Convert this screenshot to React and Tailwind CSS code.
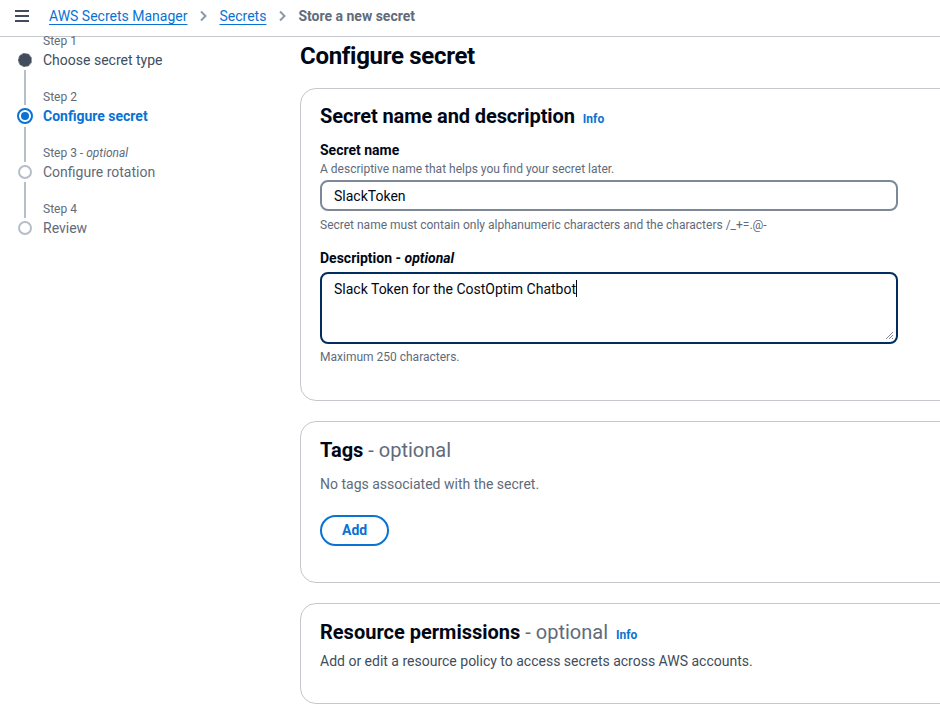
import React from "react";

const font = { fontFamily: "Roboto, 'Liberation Sans', sans-serif" };

function Steps() {
  const steps = [
    { label: "Step 1", title: "Choose secret type", state: "done" },
    { label: "Step 2", title: "Configure secret", state: "active" },
    { label: "Step 3", optional: true, title: "Configure rotation", state: "todo" },
    { label: "Step 4", title: "Review", state: "todo" },
  ];
  return (
    <div className="w-[300px] shrink-0 pl-[12px] -mt-[8px]">
      {steps.map((s, i) => (
        <div key={i} className="flex">
          <div className="w-[25px] flex flex-col items-center">
            <div
              className={`w-[2px] mb-[3px] ${s.state === "active" ? "h-[20px]" : "h-[21px]"} ${
                i === 0 ? "bg-transparent" : "bg-[#b6bec9]"
              }`}
            />
            {s.state === "done" && (
              <div className="w-[14px] h-[14px] rounded-full bg-[#414d5c] border border-[#8c8c94] border-dashed" />
            )}
            {s.state === "active" && (
              <div className="w-[16px] h-[16px] rounded-full border-2 border-[#0972d3] flex items-center justify-center">
                <div className="w-[8px] h-[8px] rounded-full bg-[#0972d3]" />
              </div>
            )}
            {s.state === "todo" && (
              <div className="w-[14px] h-[14px] rounded-full border-2 border-[#b6bec9] bg-white" />
            )}
            <div className={`w-[2px] mt-[3px] flex-1 ${i === steps.length - 1 ? "bg-transparent" : "bg-[#b6bec9]"}`} />
          </div>
          <div className="pl-[6px] pb-[14px]">
            <div className="text-[12px] leading-[16px] text-[#5f6b7a] mt-[4px]">
              {s.label}
              {s.optional && <span> - <i>optional</i></span>}
            </div>
            <div
              className={`text-[14px] leading-[22px] ${
                s.state === "active" ? "font-bold text-[#0972d3]" : s.state === "done" ? "text-[#414d5c]" : "text-[#5f6b7a]"
              }`}
            >
              {s.title}
            </div>
          </div>
        </div>
      ))}
    </div>
  );
}

function Info() {
  return <span className="text-[12px] font-bold text-[#0972d3] ml-[8px]">Info</span>;
}

function Panel({ children, className = "" }) {
  return (
    <div className={`w-[680px] rounded-[16px] border border-[#c6c6cd] bg-white px-[19px] ${className}`}>
      {children}
    </div>
  );
}

function Chevron() {
  return (
    <svg width="12" height="12" viewBox="0 0 12 12" className="mx-[10px]">
      <path d="M4 1.5l4.5 4.5L4 10.5" fill="none" stroke="#8d99a8" strokeWidth="2" />
    </svg>
  );
}

export default function App() {
  return (
    <div className="w-[940px] h-[706px] overflow-hidden bg-white text-[#000716]" style={font}>
      <div className="h-[37px] border-b border-[#c6c6cd] flex items-center px-[14px] pb-[4px]">
        <svg width="16" height="14" viewBox="0 0 16 14" className="mr-[19px]">
          <path d="M1 2h14M1 7h14M1 12h14" stroke="#414d5c" strokeWidth="2" />
        </svg>
        <a className="text-[14px] text-[#0972d3] underline underline-offset-[3px]">AWS Secrets Manager</a>
        <Chevron />
        <a className="text-[14px] text-[#0972d3] underline underline-offset-[3px]">Secrets</a>
        <Chevron />
        <span className="text-[14px] font-bold text-[#5f6b7a]">Store a new secret</span>
      </div>

      <div className="flex">
        <Steps />
        <div className="flex flex-col">
          <h1 className="text-[24px] leading-[30px] font-bold mt-[4px] mb-[17px] tracking-[-0.3px]">Configure secret</h1>

          <Panel className="pt-[14px] pb-[35px]">
            <div className="flex items-baseline">
              <h2 className="text-[20px] leading-[26px] font-bold tracking-[-0.1px]">Secret name and description</h2>
              <Info />
            </div>
            <div className="mt-[10px] text-[14px] font-bold leading-[22px]">Secret name</div>
            <div className="text-[12px] leading-[16px] text-[#5f6b7a]">
              A descriptive name that helps you find your secret later.
            </div>
            <input
              readOnly
              value="SlackToken"
              className="mt-[3px] w-[578px] h-[31px] rounded-[8px] border-2 border-[#7d8998] px-[12px] text-[14px] text-[#000716] outline-none"
              style={font}
            />
            <div className="text-[12px] leading-[16px] text-[#5f6b7a] mt-[6px]">
              Secret name must contain only alphanumeric characters and the characters /_+=.@-
            </div>
            <div className="mt-[15px] text-[14px] font-bold leading-[20px]">
              Description - <i>optional</i>
            </div>
            <div className="relative mt-[4px] w-[578px] h-[72px] rounded-[8px] border-2 border-[#002f5f] px-[12px] py-[5px] text-[14px] leading-[20px] text-[#000716]">
              Slack Token for the CostOptim Chatbot
              <span className="inline-block w-[1px] h-[17px] bg-[#000716] align-[-3px]" />
              <svg width="10" height="10" viewBox="0 0 10 10" className="absolute right-[2px] bottom-[2px]">
                <path d="M9 2L2 9M9 5L5 9M9 8L8 9" stroke="#7d8998" strokeWidth="1" />
              </svg>
            </div>
            <div className="text-[12px] leading-[16px] text-[#5f6b7a] mt-[5px]">Maximum 250 characters.</div>
          </Panel>

          <Panel className="mt-[20px] h-[162px] pt-[15px]">
            <h2 className="text-[20px] leading-[26px]">
              <b>Tags</b> <span className="text-[#5f6b7a]">- optional</span>
            </h2>
            <div className="text-[14px] text-[#5f6b7a] mt-[11px] leading-[20px]">No tags associated with the secret.</div>
            <button className="mt-[21px] h-[31px] px-[20px] rounded-full border-2 border-[#0972d3] text-[14px] font-bold text-[#0972d3]">
              Add
            </button>
          </Panel>

          <Panel className="mt-[20px] h-[101px] pt-[15px]">
            <div className="flex items-baseline">
              <h2 className="text-[20px] leading-[26px]">
                <b>Resource permissions</b> <span className="text-[#5f6b7a]">- optional</span>
              </h2>
              <Info />
            </div>
            <div className="text-[14px] text-[#414d5c] mt-[6px] leading-[20px]">
              Add or edit a resource policy to access secrets across AWS accounts.
            </div>
          </Panel>
        </div>
      </div>
    </div>
  );
}
